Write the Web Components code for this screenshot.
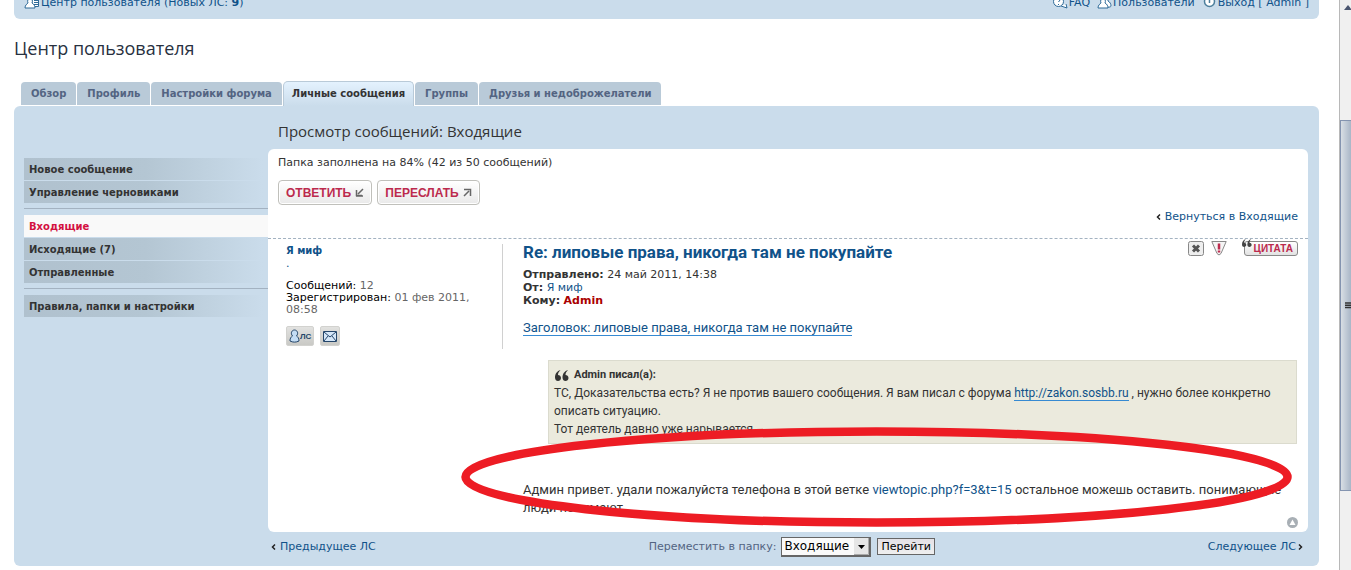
<!DOCTYPE html>
<html lang="ru">
<head>
<meta charset="utf-8">
<title>Центр пользователя</title>
<style>
  html { height: 100%; }
  body { margin: 0; min-height: 100%; background: #fff; color: #333; font: 11px/13px "DejaVu Sans", sans-serif;
    --ui: "DejaVu Sans", sans-serif; --head: "Open Sans", "Noto Sans", sans-serif; --text: Roboto, "Open Sans", sans-serif; --panel: #cadceb; --link: #105289; overflow: hidden; }
</style>
</head>
<body>
<forum-page></forum-page>
<script>
const css = `*{box-sizing:border-box} a{color:var(--link);text-decoration:none} a:hover{text-decoration:underline} svg{display:block}`;
function define(name, html) {
  const t = document.createElement('template');
  t.innerHTML = html.replace('<style>', '<style>' + css);
  customElements.define(name, class extends HTMLElement {
    constructor() { super(); this.attachShadow({ mode: 'open' }).append(t.content.cloneNode(true)); }
  });
}

define('top-nav', `<style>
:host{display:block;background:var(--panel);border-radius:0 0 6px 6px;padding:0 10px 10px}
nav{display:flex;justify-content:space-between;margin-top:-4px}
.side{display:flex;gap:7px}
a{display:flex;align-items:center;gap:1px;line-height:13px;white-space:pre}
</style>
<nav>
 <a href="#ucp"><svg width="16" height="13" viewBox="0 0 16 13" fill="#fff" stroke="#2f6b98"><path d="M8 1.5h6.5v9H8z"/><path d="M10 4.5h4M10 6.500h4M10 8.500h4"/><path d="M1 12c0-3 2-4 3-5-1-2 0-5 2-5s3 3 2 5c2 1 3 3 3 5z"/></svg><span>Центр пользователя (Новых ЛС: <b>9</b>)</span></a>
 <div class="side">
  <a href="#faq"><svg width="16" height="13" viewBox="0 0 16 13" fill="#fff" stroke="#2f6b98"><circle cx="6.500" cy="5.500" r="5"/><path d="M9 10l6 2-1-4"/><path d="M5 4c0-2 4-2 3 0l-1.500 2M6.500 8v1" fill="none"/></svg>FAQ</a>
  <a href="#members"><svg width="15" height="13" viewBox="0 0 15 13" fill="#fff" stroke="#2f6b98"><path d="M7 10c4 2 7 1 7 0 0-2-1-4-3-5V2H7z"/><path d="M1 12c0-3 2-4 3-5-1-2 0-5 2-5s3 3 2 5c2 1 3 3 3 5z"/></svg>Пользователи</a>
  <a href="#logout"><svg width="15" height="13" viewBox="0 0 15 13" fill="#fff" stroke="#4d7f9c" stroke-width="1.500"><circle cx="7.500" cy="5.500" r="5"/><path d="M7.500 2v5"/></svg>Выход [ Admin ]</a>
 </div>
</nav>`);

define('tab-bar', `<style>
:host{display:block}
ul{display:flex;align-items:flex-end;gap:1px;margin:0;padding:0 7px;list-style:none}
::slotted(*){flex:none}
</style><ul role="tablist"><slot></slot></ul>`);

define('tab-item', `<style>
:host{display:block;font-weight:700;font-size:10px;padding-bottom:1px}
a{display:block;padding:0 10px;line-height:23px;background:#b9cad8;border-radius:4px 4px 0 0;color:#536482}
:host([active]){padding:0}
:host([active]) a{padding:0 8px 1px;color:#333;background:linear-gradient(#e4f2fe,var(--panel));border:1px solid #b9cad8;border-bottom:0;border-radius:5px 5px 0 0}
</style><a href="#tab"><slot></slot></a>`);

define('menu-item', `<style>
:host{display:block;font-weight:700;font-size:10px;margin-bottom:1px}
a{display:block;padding:2px 5px 0;line-height:20px;color:#333;background:linear-gradient(90deg,#b0c1ce,#b4c6d3 50%,var(--panel) 98%)}
:host([active]) a{background:#f9f9f9;color:#d31141}
</style><a href="#folder"><slot></slot></a>`);

define('side-menu', `<style>
:host{display:block;padding:52px 0 0 10px}
.sep{border-top:1px solid #a3b2c1;margin:4px 0 6px}
nav{display:flow-root}
</style>
<nav>
<menu-item>Новое сообщение</menu-item><menu-item>Управление черновиками</menu-item>
<div class="sep"></div>
<menu-item active>Входящие</menu-item><menu-item>Исходящие (7)</menu-item><menu-item>Отправленные</menu-item>
<div class="sep"></div>
<menu-item>Правила, папки и настройки</menu-item>
</nav>`.replace('margin:4px 0 6px', 'margin:5px 0 6px'));

define('action-button', `<style>
:host{display:block}
button{display:flex;align-items:center;gap:4px;height:25px;padding:0 7px;border:1px solid #c0c0bb;border-radius:4px;background:linear-gradient(#fff,#e9e9e9);box-shadow:inset 0 0 0 1px #fff;color:#bc2a4d;font:700 12px "Liberation Sans",sans-serif;cursor:pointer}
</style><button type="button"><slot></slot><slot name="icon"></slot></button>`);

define('folder-tools', `<style>
:host{display:block;padding:7px 10px 15px}
.buttons{display:flex;gap:5px;margin:11px 0 5px}
.back{display:flex;justify-content:flex-end;align-items:center;gap:4px}
p{margin:0}
</style>
<p>Папка заполнена на 84% (42 из 50 сообщений)</p>
<div class="buttons">
<action-button>ОТВЕТИТЬ<svg slot="icon" width="9" height="9" viewBox="0 0 9 9" fill="none" stroke="#666" stroke-width="1.500"><path d="M8 1L3 6M1.500 2v5.500H7M1 8h7"/></svg></action-button>
<action-button>ПЕРЕСЛАТЬ<svg slot="icon" width="9" height="9" viewBox="0 0 9 9" fill="none" stroke="#666" stroke-width="1.500"><path d="M1 8l5-5M1 1.500h6.500V8M1 1.500h7"/></svg></action-button>
</div>
<div class="back"><svg width="5" height="6" viewBox="0 0 5 6" fill="none" stroke="#222" stroke-width="1.500"><path d="M4 .5L1.500 3 4 5.500"/></svg><a href="#inbox">Вернуться в Входящие</a></div>`);

define('author-profile', `<style>
:host{display:block;border-right:1px solid #d0d0d0;font-size:11px;line-height:12px;color:#666;height:105px}
b{font-size:10px}
b a{display:block;padding-top:1px}
.rank{line-height:14px;margin-bottom:9px;color:#105289}
i{font-style:normal;color:#000}
p{margin:0;max-width:200px}
.contact{display:flex;gap:6px;margin-top:10px}
.contact a{display:flex;align-items:center;justify-content:center;height:20px;padding:0 2px;background:linear-gradient(#e2e2e0,#c9c9c5);border-radius:2px;border:1px solid #d2d2cf;font:700 8px "Liberation Sans",sans-serif;color:#24466b}
</style>
<b><a href="#user">Я миф</a></b>
<div class="rank">.</div>
<p><i>Сообщений:</i> 12</p>
<p><i>Зарегистрирован:</i> 01 фев 2011, 08:58</p>
<div class="contact">
<a href="#pm"><svg width="11" height="14" viewBox="0 0 11 14" fill="#c3dcf4" stroke="#24466b"><path d="M1 12c0-3 1-4 2.500-5C1 4 3 1 5.500 1S10 4 7.500 7C9 8 10 9 10 12c-3 1.500-6 1.500-9 0z"/></svg>ЛС</a>
<a href="#mail" aria-label="E-mail"><svg width="14" height="11" viewBox="0 0 14 11" fill="#d5e7f8" stroke="#24466b"><path d="M.5.5h13v10H.5z"/><path d="M1 1l6 5 6-5M1 10l4-5M13 10L9 5" fill="none"/></svg></a>
</div>`);

define('quote-box', `<style>
:host{display:block;margin:0 1px 0 25px}
blockquote{margin:0;padding:5px;border:1px solid #dbdbce;background:#ebeadd;font-size:12px;line-height:18px}
cite{display:flex;align-items:center;gap:5px;font:700 11px/18px var(--text);padding-left:1px}
</style><blockquote><cite><svg width="14" height="11" viewBox="0 0 14 11" fill="#333"><path d="M5.500 0C2 1 0 4 0 7.500 0 10 1.500 11 3 11s3-1 3-3-1.500-3-3-3C3 3 4 1.500 5.500 0zM13 0C9.500 1 7.500 4 7.500 7.500 7.500 10 9 11 10.500 11s3-1 3-3-1.500-3-3-3C10.500 3 11.500 1.500 13 0z"/></svg><slot name="cite"></slot></cite><slot></slot></blockquote>`);

define('message-post', `<style>
:host{display:grid;grid-template-columns:217px minmax(0,1fr);align-items:start;column-gap:20px;border-top:1px dashed #a3b2c1;padding:5px 10px 4px 18px;position:relative}
h3{margin:0;font:700 17px/16px var(--text);color:#105289}
.head{display:flex;justify-content:space-between;align-items:flex-start;margin-bottom:8px}
.tools{display:flex;align-items:center;margin-top:-3px}
.tools a{display:block}
.tools a+a{margin-left:7px}
.tools a.quote{display:flex;margin-left:17px;position:relative;height:15px;padding:0 4px 0 9px;border:1px solid #888;border-radius:3px;background:linear-gradient(#fff,#e2e2e2);font:700 10px/14px "Liberation Sans",sans-serif;color:#bc2a4d}
.quote svg{position:absolute;left:-3px;top:-3px}
.meta{margin:0}
.content{font:13px/18px var(--text)}
.line{margin-top:12px}
.under{border-bottom:1px solid #368ad2}
quote-box{margin-top:23px}
.body{margin:37px 0 0}
.up{display:block;width:11px;margin-left:auto}
.ring{position:absolute;left:193px;top:188px;width:calc(100% - 209px);height:100px;overflow:visible;pointer-events:none}
</style>
<author-profile></author-profile>
<article>
<div class="head"><h3>Re: липовые права, никогда там не покупайте</h3>
<div class="tools">
<a href="#delete" aria-label="Удалить"><svg width="16" height="15" viewBox="0 0 16 15"><rect x=".5" y=".5" width="15" height="14" rx="2" fill="#eee" stroke="#888"/><path d="M5 4.500l6 6M11 4.500l-6 6" stroke="#555" stroke-width="3"/></svg></a>
<a href="#report" aria-label="Пожаловаться"><svg width="16" height="15" viewBox="0 0 16 15"><path d="M.8.500h14.400L10 12.500q-2 3-4 0z" fill="#f5f5f5" stroke="#888"/><path d="M8 2.500v6M8 9.500v2" stroke="#bc2a4d" stroke-width="2.500"/></svg></a>
<a class="quote" href="#quote"><svg width="10" height="8" viewBox="0 0 14 11" fill="#444"><path d="M5.500 0C2 1 0 4 0 7.500 0 10 1.500 11 3 11s3-1 3-3-1.500-3-3-3C3 3 4 1.500 5.500 0zM13 0C9.500 1 7.500 4 7.500 7.500 7.500 10 9 11 10.500 11s3-1 3-3-1.500-3-3-3C10.500 3 11.500 1.500 13 0z"/></svg>ЦИТАТА</a>
</div></div>
<p class="meta"><b>Отправлено:</b> 24 май 2011, 14:38<br><b>От:</b> <a href="#user">Я миф</a><br><b>Кому:</b> <b><a href="#admin" style="color:#a00">Admin</a></b></p>
<div class="content">
<div class="line"><a class="under" href="#subject">Заголовок: липовые права, никогда там не покупайте</a></div>
<quote-box><span slot="cite">Admin писал(а):</span>ТС, Доказательства есть? Я не против вашего сообщения. Я вам писал с форума <a class="under" href="#site">http://zakon.sosbb.ru</a> , нужно более конкретно<br>описать ситуацию.<br>Тот деятель давно уже нарывается.</quote-box>
<p class="body">Админ привет. удали пожалуйста телефона в этой ветке <a href="#topic">viewtopic.php?f=3&amp;t=15</a> остальное можешь оставить. понимающие<br>люди понимают</p>
</div>
<a class="up" href="#top" aria-label="Вернуться к началу"><svg width="11" height="11" viewBox="0 0 11 11"><circle cx="5.500" cy="5.500" r="5.500" fill="#a8afb5"/><path d="M5.500 2.500L8.500 8h-6z" fill="#fff"/></svg></a>
</article>
<svg class="ring" viewBox="0 0 831 100" preserveAspectRatio="none" aria-hidden="true"><ellipse cx="415.500" cy="50" rx="411" ry="45.500" fill="none" stroke="#ed1c24" stroke-width="8.500"/></svg>`);

define('folder-footer', `<style>
:host{display:flex;justify-content:space-between;align-items:center;padding:0 5px 0 3px;height:29px}
form{display:flex;align-items:center;gap:5px;margin:0}
label{color:#536482}
.pick{position:relative}
select{appearance:none;display:block;width:90px;height:20px;padding:0 2px;border:1px solid #666;border-right-width:2px;border-bottom-width:2px;border-radius:0;background:#fafafa;color:#000;font:12px var(--ui)}
.pick svg{position:absolute;right:2px;top:1px;pointer-events:none}
button{height:17px;padding:0 3px;border:1px solid #666;border-radius:0;background:linear-gradient(#e4e1e6,#efefef);font:11px/14px var(--ui);color:#000;margin-left:1px}
.nav{display:flex;align-items:center;gap:4px}
.next{gap:2px}
</style>
<div class="nav"><svg width="5" height="6" viewBox="0 0 5 6" fill="none" stroke="#222" stroke-width="1.500"><path d="M4 .5L1.500 3 4 5.500"/></svg><a href="#prev">Предыдущее ЛС</a></div>
<form><label for="dest">Переместить в папку:</label><span class="pick"><select id="dest"><option>Входящие</option></select><svg width="15" height="17" viewBox="0 0 15 17"><path d="M0 0h15v17H0z" fill="#e6e6e6"/><path d="M14.500 0v16.500H0" fill="none" stroke="#aaa"/><path d="M4 7h7l-3.500 4z"/></svg></span><button type="button">Перейти</button></form>
<div class="nav next"><a href="#next">Следующее ЛС</a><svg width="5" height="6" viewBox="0 0 5 6" fill="none" stroke="#222" stroke-width="1.500"><path d="M1 .5L3.500 3 1 5.500"/></svg></div>`);

define('user-panel', `<style>
:host{display:grid;grid-template-columns:254px minmax(0,1fr);background:var(--panel);border-radius:6px;padding-right:11px}
h2{margin:0;padding:14px 10px 7px;font:400 15px/22px var(--head);color:#333}
.card{background:#fff;border-radius:6px}
main{padding-bottom:5px}
</style>
<side-menu></side-menu>
<main><h2>Просмотр сообщений: Входящие</h2>
<div class="card"><folder-tools></folder-tools><message-post></message-post></div>
<folder-footer></folder-footer></main>`);

define('scroll-track', `<style>
:host{display:flex;flex-direction:column;align-items:stretch;width:12px;overflow:hidden;background:#f0f0f0;border-left:1px solid #b8b8b8}
.top{flex:0 0 120px;padding:5px 0 0 4px}
.thumb{flex:0 0 371px;display:flex;align-items:center;padding-left:4px;border:1px solid #8494b0;border-right:0;background:linear-gradient(90deg,#d8dee4,#a9b6c7)}
</style><div class="top"><svg width="8" height="5" viewBox="0 0 8 5"><path d="M4 0l4 5H0z" fill="#4b5670"/></svg></div>
<div class="thumb"><svg width="8" height="9" viewBox="0 0 8 9"><path d="M0 1h8M0 4h8M0 7h8" stroke="#333" stroke-width="2"/></svg></div>`);

define('forum-page', `<style>
:host{display:flex;min-height:100vh}
.page{flex:1;min-width:0;padding:0 20px 4px 14px}
h1{margin:0;padding:16px 0 20px;font:400 18px/26px var(--head);color:#28313f}
</style>
<div class="page"><top-nav></top-nav><h1>Центр пользователя</h1>
<tab-bar><tab-item>Обзор</tab-item><tab-item>Профиль</tab-item><tab-item>Настройки форума</tab-item><tab-item active>Личные сообщения</tab-item><tab-item>Группы</tab-item><tab-item>Друзья и недоброжелатели</tab-item></tab-bar>
<user-panel></user-panel></div>
<scroll-track></scroll-track>`);
</script>
</body>
</html>
